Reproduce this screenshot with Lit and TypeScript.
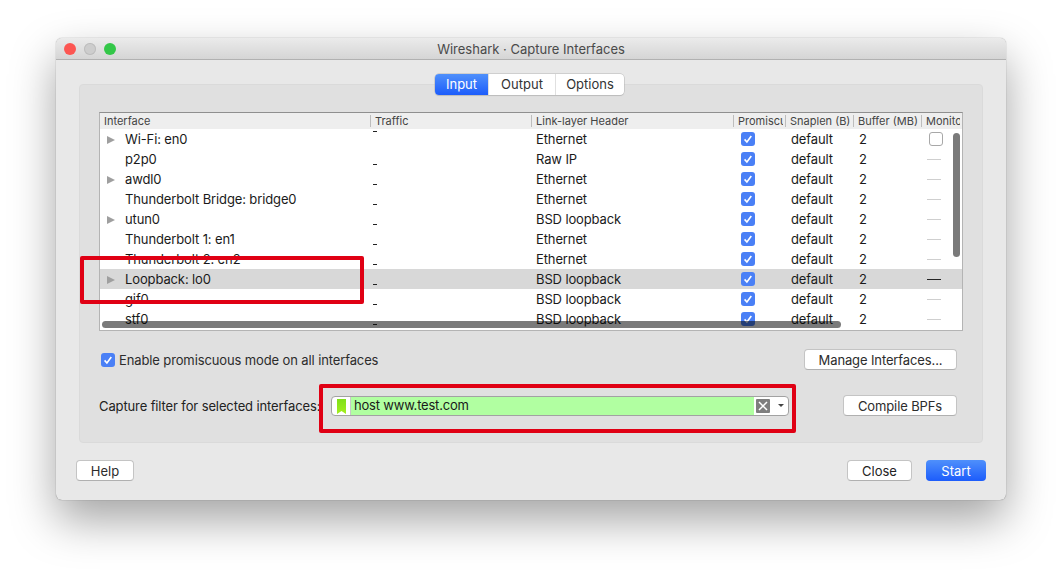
import { LitElement, html, css, nothing } from 'lit';
import { customElement } from 'lit/decorators.js';

const HEADERS = ['Interface', 'Traffic', 'Link-layer Header', 'Promiscuous', 'Snaplen (B)', 'Buffer (MB)', 'Monitor Mode'];

const ROWS = [
  { name: 'Wi-Fi: en0', arrow: true, link: 'Ethernet' },
  { name: 'p2p0', arrow: false, link: 'Raw IP' },
  { name: 'awdl0', arrow: true, link: 'Ethernet' },
  { name: 'Thunderbolt Bridge: bridge0', arrow: false, link: 'Ethernet' },
  { name: 'utun0', arrow: true, link: 'BSD loopback' },
  { name: 'Thunderbolt 1: en1', arrow: false, link: 'Ethernet' },
  { name: 'Thunderbolt 2: en2', arrow: false, link: 'Ethernet' },
  { name: 'Loopback: lo0', arrow: true, link: 'BSD loopback', selected: true },
  { name: 'gif0', arrow: false, link: 'BSD loopback' },
  { name: 'stf0', arrow: false, link: 'BSD loopback' }
];

const check = html`<span class="check">
  <svg width="14" height="14" viewBox="0 0 14 14"><path d="M3.6 7.4l2.3 2.6 4.4-6" fill="none" stroke="#fff" stroke-width="1.6"/></svg>
</span>`;

@customElement('app-root')
export class AppRoot extends LitElement {
  static styles = css`
    :host {
      display: block;
      height: 574px;
      overflow: hidden;
      background: #fff;
      font-family: Inter, 'Liberation Sans', Arial, sans-serif;
      font-size: 13px;
      color: #222;
      padding: 38px 56px 0;
      box-sizing: border-box;
      position: relative;
    }
    .window {
      width: 950px;
      height: 462px;
      border-radius: 6px;
      background: #e8e8e8;
      box-shadow: 0 0 1px rgba(0, 0, 0, 0.55), 0 20px 45px rgba(0, 0, 0, 0.36);
      display: flex;
      flex-direction: column;
      overflow: hidden;
    }
    .titlebar {
      height: 22px;
      box-sizing: border-box;
      flex: none;
      display: flex;
      align-items: center;
      justify-content: center;
      position: relative;
      background: linear-gradient(#ebebeb, #d5d5d5);
      border-bottom: 1px solid #b1b1b1;
      color: #4a4a4a;
      font-size: 13px;
    }
    .lights {
      position: absolute;
      left: 8px;
      top: 5px;
      display: flex;
      gap: 8px;
    }
    .lights span {
      width: 12px;
      height: 12px;
      border-radius: 50%;
    }
    .red { background: #fc5652; }
    .grey { background: #cdcdcd; box-shadow: inset 0 0 0 1px #bdbdbd; }
    .green { background: #33c748; }
    .tabs {
      display: flex;
      align-self: center;
      margin: 14px 3px 0 0;
      height: 21px;
      box-sizing: border-box;
      background: #fff;
      border-radius: 4px;
      box-shadow: 0 0 0 0.5px #b5b5b5, 0 1px 1px #c4c4c4;
      position: relative;
      z-index: 1;
      line-height: 21px;
    }
    .tab {
      text-align: center;
      border-left: 1px solid #e0e0e0;
      color: #333;
      white-space: nowrap;
      box-sizing: border-box;
    }
    .tab.output { width: 67px; }
    .tab.options { width: 69px; }
    .tab.active {
      width: 53px;
      border: 0;
      color: #fff;
      border-radius: 4px 0 0 4px;
      background: linear-gradient(#4f90fb, #1c5cfb);
    }
    .panel {
      margin: -11px 23px 0;
      background: #e0e0e0;
      border: 1px solid #dadada;
      border-radius: 4px;
      padding: 27px 19px 26px;
      height: 359px;
      box-sizing: border-box;
      letter-spacing: -0.12px;
    }
    .table {
      position: relative;
      width: 864px;
      height: 219px;
      box-sizing: border-box;
      background: #fff;
      border: 1px solid #b4b4b4;
      border-top-color: #8f8f8f;
      overflow: hidden;
    }
    .head, .row {
      display: grid;
      grid-template-columns: 270px 161px 202px 52px 68px 68px 41px;
    }
    .head {
      height: 16px;
      background: #eeeeee;
      font-size: 11px;
      line-height: 16px;
      color: #444;
      letter-spacing: 0;
    }
    .head div {
      padding-left: 5px;
      overflow: hidden;
      white-space: nowrap;
      border-right: 2px solid transparent;
      background: linear-gradient(#bdbdbd, #bdbdbd) left 2px / 1px 12px no-repeat;
    }
    .head div:first-child { background: none; padding-left: 4px; }
    .row {
      height: 20px;
      line-height: 20px;
      color: #1a1a1a;
    }
    .row.selected { background: #d8d8d8; }
    .name {
      position: relative;
      padding-left: 25px;
      white-space: nowrap;
    }
    .arrow {
      position: absolute;
      left: 7px;
      top: 7px;
      width: 0;
      height: 0;
      border-left: 8px solid #9f9f9f;
      border-top: 4.5px solid transparent;
      border-bottom: 4.5px solid transparent;
    }
    .traffic { position: relative; }
    .traffic::after {
      content: '';
      position: absolute;
      left: 3px;
      top: 15px;
      width: 4px;
      height: 1px;
      background: #222;
    }
    .traffic.first::after { top: 2px; }
    .link { padding-left: 5px; }
    .promisc { padding: 3px 0 0 8px; box-sizing: border-box; }
    .check {
      display: block;
      width: 14px;
      height: 14px;
      border-radius: 3px;
      background: #4a80f6;
    }
    .check svg { display: block; }
    .snap { padding-left: 6px; }
    .buffer { padding-left: 6px; }
    .monitor { padding: 3px 0 0 8px; box-sizing: border-box; }
    .box {
      display: block;
      width: 14px;
      height: 14px;
      box-sizing: border-box;
      border-radius: 3px;
      background: #fff;
      border: 1px solid #a8a8a8;
    }
    .dash {
      display: block;
      width: 14px;
      height: 1px;
      margin: 7px 0 0 -2px;
      background: #cfcfcf;
    }
    .selected .dash { background: #222; }
    .vbar, .hbar {
      position: absolute;
      background: rgba(0, 0, 0, 0.52);
      border-radius: 4px;
    }
    .vbar { left: 853px; top: 20px; width: 7px; height: 124px; }
    .hbar { left: 2px; top: 208px; width: 739px; height: 7px; }
    .line {
      display: flex;
      align-items: center;
      justify-content: space-between;
      height: 21px;
    }
    .line.promisc-all { margin-top: 18px; }
    .line.filter { margin-top: 25px; }
    .enable {
      display: flex;
      align-items: center;
      gap: 4px;
      padding-left: 2px;
      color: #2c2c2c;
    }
    button {
      display: block;
      height: 21px;
      padding: 0;
      box-sizing: border-box;
      font: inherit;
      letter-spacing: inherit;
      color: #2c2c2c;
      background: #fff;
      border: 1px solid #c4c4c4;
      border-bottom-color: #b0b0b0;
      border-radius: 4px;
    }
    .manage { width: 153px; margin-right: 6px; }
    .compile { width: 114px; margin-right: 6px; }
    .filter-left {
      display: flex;
      align-items: center;
    }
    .filter-label {
      width: 232px;
      white-space: nowrap;
    }
    .combo {
      display: flex;
      width: 458px;
      height: 20px;
      box-sizing: border-box;
      border: 1px solid #a2a2a2;
      border-radius: 4px;
      background: #fff;
      overflow: hidden;
    }
    .mark {
      width: 19px;
      flex: none;
      display: flex;
      justify-content: center;
      border-right: 1px solid #c8c8c8;
      padding-top: 2px;
      box-sizing: border-box;
    }
    .field {
      flex: 1;
      background: #b1ffa1;
      line-height: 17px;
      padding-left: 3px;
      color: #1a1a1a;
      letter-spacing: -0.2px;
    }
    .clear {
      width: 14px;
      height: 14px;
      margin: 2px 0 0 2px;
      flex: none;
      display: block;
    }
    .drop {
      width: 0;
      height: 0;
      margin: 7px 4px 0 8px;
      flex: none;
      border-top: 3px solid #444;
      border-left: 3.5px solid transparent;
      border-right: 3.5px solid transparent;
    }
    .footer {
      display: flex;
      align-items: center;
      margin: 17px 20px 0;
      gap: 14px;
    }
    .help { width: 58px; margin-right: auto; }
    .close { width: 65px; color: #222; }
    .start {
      width: 60px;
      color: #fff;
      border: 0;
      background: linear-gradient(#4f90fb, #1c5cfb);
    }
    .note {
      position: absolute;
      box-sizing: border-box;
      border: 4px solid #e00014;
      border-radius: 2px;
      pointer-events: none;
    }
    .note.a { left: 80px; top: 256px; width: 284px; height: 48px; }
    .note.b { left: 319px; top: 384px; width: 477px; height: 49px; }
  `;

  renderRow(row: any, i: number) {
    return html`
      <div class="row ${row.selected ? 'selected' : ''}">
        <div class="name">${row.arrow ? html`<span class="arrow"></span>` : nothing}${row.name}</div>
        <div class="traffic ${i === 0 ? 'first' : ''}"></div>
        <div class="link">${row.link}</div>
        <div class="promisc">${check}</div>
        <div class="snap">default</div>
        <div class="buffer">2</div>
        <div class="monitor">${i === 0 ? html`<span class="box"></span>` : html`<span class="dash"></span>`}</div>
      </div>
    `;
  }

  render() {
    return html`
      <div class="window">
        <div class="titlebar">
          <div class="lights"><span class="red"></span><span class="grey"></span><span class="green"></span></div>
          Wireshark · Capture Interfaces
        </div>
        <div class="tabs">
          <div class="tab active">Input</div>
          <div class="tab output">Output</div>
          <div class="tab options">Options</div>
        </div>
        <div class="panel">
          <div class="table">
            <div class="head">${HEADERS.map((h) => html`<div>${h}</div>`)}</div>
            ${ROWS.map((r, i) => this.renderRow(r, i))}
            <div class="vbar"></div>
            <div class="hbar"></div>
          </div>
          <div class="line promisc-all">
            <div class="enable">${check}Enable promiscuous mode on all interfaces</div>
            <button class="manage">Manage Interfaces...</button>
          </div>
          <div class="line filter">
            <div class="filter-left">
              <span class="filter-label">Capture filter for selected interfaces:</span>
              <div class="combo">
                <div class="mark">
                  <svg width="9" height="15" viewBox="0 0 9 15">
                    <defs><linearGradient id="g" x1="0" y1="0" x2="0" y2="1"><stop offset="0" stop-color="#7fe01a"/><stop offset="1" stop-color="#a4ee1e"/></linearGradient></defs>
                    <path d="M0 0h9v15l-4.5-3-4.5 3z" fill="url(#g)"/>
                  </svg>
                </div>
                <div class="field">host www.test.com</div>
                <svg class="clear" viewBox="0 0 14 14">
                  <rect width="14" height="14" rx="1" fill="#7e7e7e"/>
                  <path d="M3 3l8 8M11 3l-8 8" stroke="#fff" stroke-width="1.5"/>
                </svg>
                <span class="drop"></span>
              </div>
            </div>
            <button class="compile">Compile BPFs</button>
          </div>
        </div>
        <div class="footer">
          <button class="help">Help</button>
          <button class="close">Close</button>
          <button class="start">Start</button>
        </div>
      </div>
      <div class="note a"></div>
      <div class="note b"></div>
    `;
  }
}
